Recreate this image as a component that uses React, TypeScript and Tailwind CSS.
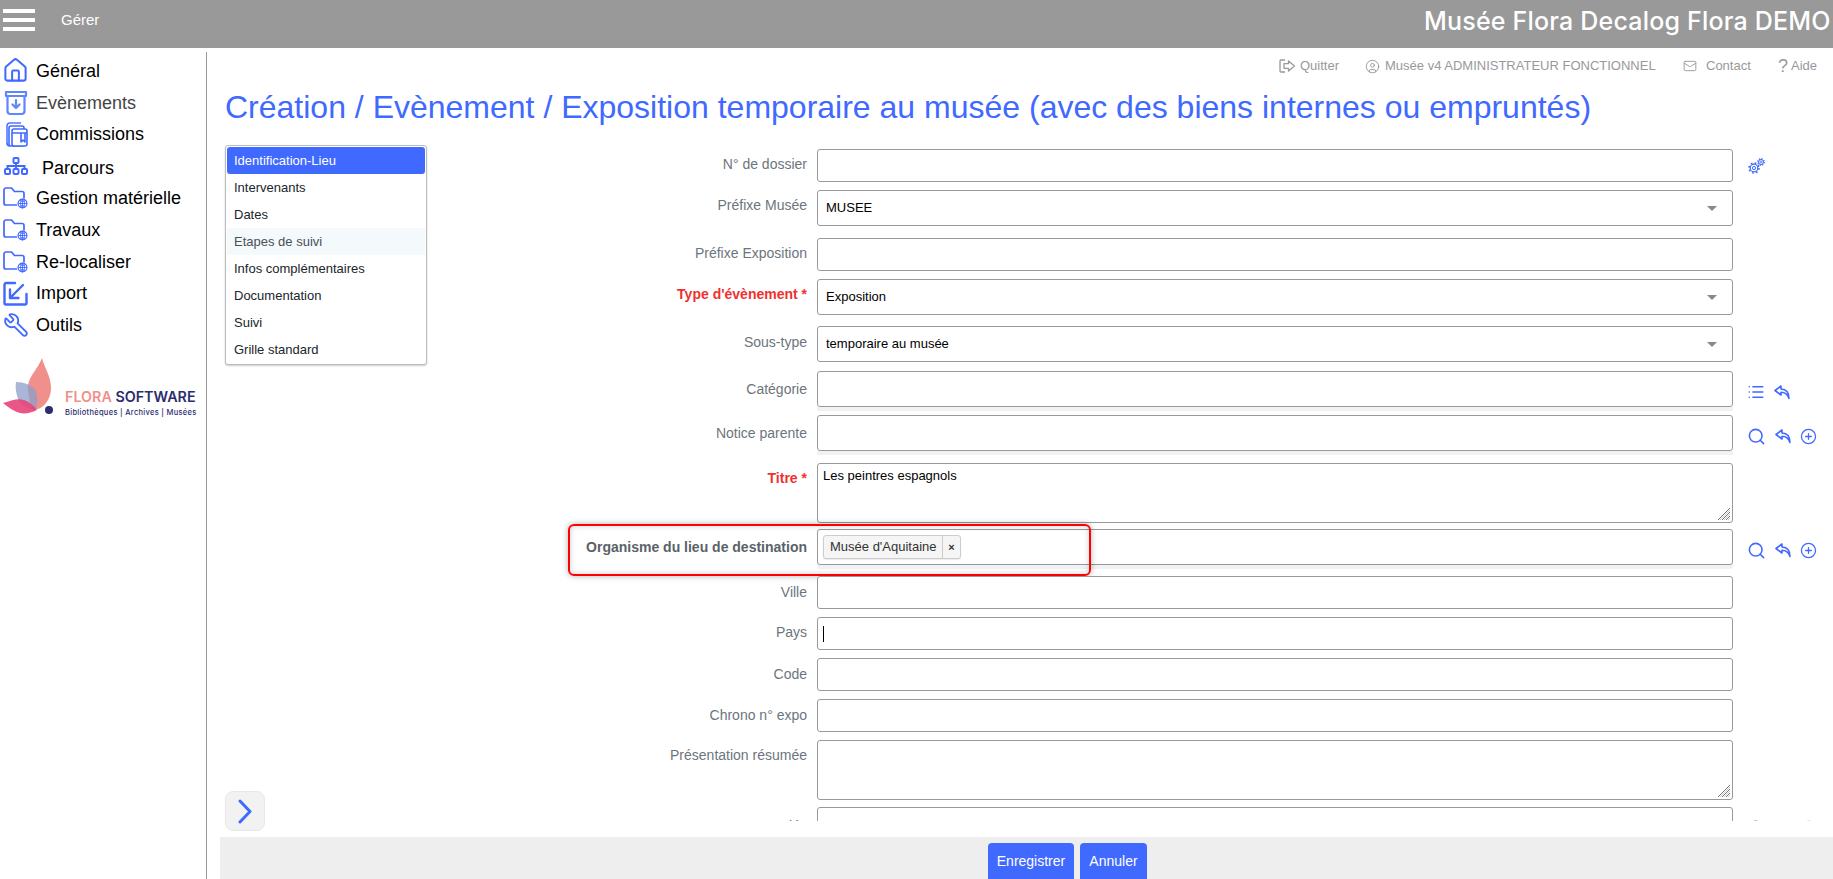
import React from "react";
import { House, Wrench, Search, CirclePlus, List, Mail, CircleUser } from "lucide-react";

const BLUE = "#4069ff";

function ArchiveIcon() {
  return (
    <svg width="26" height="26" viewBox="0 0 26 26" fill="none" stroke="#5f85ff" strokeWidth="2.2" strokeLinejoin="round" strokeLinecap="round">
      <path d="M3 2h20v4H3z" />
      <path d="M4.5 6v15a3 3 0 0 0 3 3h11a3 3 0 0 0 3-3V6" />
      <path d="M13 10v8M9.5 14.5 13 18l3.5-3.5M8.5 8.5" />
    </svg>
  );
}
function CommissionIcon() {
  return (
    <svg width="26" height="27" viewBox="0 0 26 27" fill="none" stroke={BLUE} strokeWidth="1.6" strokeLinejoin="round">
      <path d="M4 22V5a3 3 0 0 1 3-3h11" opacity=".9" />
      <path d="M7 25a3 3 0 0 1-3-3" />
      <rect x="6" y="5" width="15" height="20" rx="2" fill="#fff" />
      <rect x="9" y="8" width="15" height="17" rx="2" fill="#fff" />
      <path d="M9 12h15M18 12v9l2-2 2 2v-9" />
    </svg>
  );
}
function ParcoursIcon() {
  return (
    <svg width="24" height="18" viewBox="0 0 24 18" fill="none" stroke={BLUE} strokeWidth="2">
      <rect x="9.5" y="1" width="5" height="5" rx="1" />
      <rect x="1" y="12" width="5" height="5" rx="1" />
      <rect x="9.5" y="12" width="5" height="5" rx="1" />
      <rect x="18" y="12" width="5" height="5" rx="1" />
      <path d="M12 6v6M3.5 12V9h17v3" />
    </svg>
  );
}
function FolderGlobeIcon() {
  return (
    <svg width="25" height="22" viewBox="0 0 25 22" fill="none" stroke={BLUE} strokeWidth="1.7" strokeLinejoin="round">
      <path d="M14 18H3a2 2 0 0 1-2-2V3a2 2 0 0 1 2-2h5.5l3 3.5H19a2 2 0 0 1 2 2v5" />
      <circle cx="19.5" cy="16.5" r="4.4" fill="#fff" strokeWidth="1.2" />
      <path d="M15 16.5h9M19.5 12v9M16.5 13.5c2 1 4 1 6 0M16.5 19.5c2-1 4-1 6 0" strokeWidth=".9" />
      <ellipse cx="19.5" cy="16.5" rx="2" ry="4.4" strokeWidth=".9" />
    </svg>
  );
}
function ImportIcon() {
  return (
    <svg width="25" height="25" viewBox="0 0 25 25" fill="none" stroke={BLUE} strokeWidth="2.4" strokeLinejoin="round" strokeLinecap="round">
      <path d="M12 2H3a2 2 0 0 0-1.500 1.500V22a1.500 1.500 0 0 0 1.500 1.500h19a1.500 1.500 0 0 0 1.500-1.500V13" />
      <path d="M20 4 7 17M7 8.500V17h8.500" />
    </svg>
  );
}
function ReplyIcon() {
  return (
    <svg width="16" height="15" viewBox="0 0 16 15" fill="none" stroke={BLUE} strokeWidth="1.600" strokeLinejoin="round" strokeLinecap="round">
      <path d="M7 1 1 5.500 7 10V7.300c3.500 0 6.500 1.500 8 6.200 0-6-3-9.300-8-9.500z" />
    </svg>
  );
}
function LogoutIcon() {
  return (
    <svg width="17" height="14" viewBox="0 0 17 14" fill="none" stroke="#999" strokeWidth="1.300" strokeLinejoin="round">
      <path d="M6 1H2a1 1 0 0 0-1 1v10a1 1 0 0 0 1 1h4" />
      <path d="M9.500 2 15.500 7l-6 5V9.300H5V4.700h4.500z" />
    </svg>
  );
}
function GearsIcon() {
  return (
    <svg width="17" height="16" viewBox="0 0 17 16" fill="none" stroke={BLUE}>
      <circle cx="6" cy="10" r="3.800" strokeWidth="1.200" />
      <circle cx="6" cy="10" r="5" strokeWidth="1.500" strokeDasharray="1.800 2.120" />
      <circle cx="6" cy="10" r="1.600" strokeWidth="1" />
      <circle cx="13" cy="4" r="2.500" strokeWidth="1" />
      <circle cx="13" cy="4" r="3.300" strokeWidth="1.200" strokeDasharray="1.300 1.290" />
      <circle cx="13" cy="4" r="1" strokeWidth=".8" />
    </svg>
  );
}
function ResizeHandle() {
  return (
    <svg width="14" height="14" viewBox="0 0 14 14" className="absolute right-[2px] bottom-[2px] pointer-events-none" fill="none" strokeWidth="1">
      <path d="M1 13 13 1M5 13l8-8M9 13l4-4" stroke="#777" />
      <path d="M3 13 13 3M7 13l6-6M11 13l2-2" stroke="#ccc" />
    </svg>
  );
}
function Logo() {
  return (
    <div className="relative w-[200px] h-[70px] mt-[12px]">
      <svg width="60" height="66" viewBox="0 0 60 66" className="absolute left-0 top-0">
        <path d="M42 5C37 18 27 24 28 37c1 11 4 18 5 20 9 0 18-9 18-22C51 23 44 14 42 5z" fill="#f0908a" />
        <path d="M16 29c8 0 16 3 20 9 2 7 2 13 0 18-8 1-15-3-18-10-2-6-3-12-2-17z" fill="#8c9dc9" fillOpacity=".75" />
        <path d="M3 50c8-2 14-5 21-3 6 2 10 6 13 10-6 3-12 4-17 3-7-2-12-6-17-10z" fill="#e8447a" fillOpacity=".9" />
        <circle cx="49" cy="57" r="4" fill="#2b2d6e" />
      </svg>
      <div className="absolute left-[65px] top-[36px] whitespace-nowrap font-['Inter',sans-serif] font-semibold text-[14.300px] leading-[16px]">
        <span className="text-[#f0908a]">FLORA </span>
        <span className="text-[#2b2d6e]">SOFTWARE</span>
      </div>
      <div className="absolute left-[65px] top-[55px] whitespace-nowrap font-['Inter',sans-serif] font-medium text-[7.500px] tracking-[0.3px] leading-[10px] text-[#2b2d6e]">
        Bibliothèques | Archives | Musées
      </div>
    </div>
  );
}

const navItems: { label: string; icon: React.ReactNode; cls: string }[] = [
  { label: "Général", icon: <House size={27} color={BLUE} strokeWidth={1.800} />, cls: "text-black" },
  { label: "Evènements", icon: <ArchiveIcon />, cls: "text-[#444]" },
  { label: "Commissions", icon: <CommissionIcon />, cls: "text-black" },
  { label: "Parcours", icon: <ParcoursIcon />, cls: "text-black ml-[6px] mt-[3px]" },
  { label: "Gestion matérielle", icon: <FolderGlobeIcon />, cls: "text-black" },
  { label: "Travaux", icon: <FolderGlobeIcon />, cls: "text-black" },
  { label: "Re-localiser", icon: <FolderGlobeIcon />, cls: "text-black" },
  { label: "Import", icon: <ImportIcon />, cls: "text-black" },
  { label: "Outils", icon: <Wrench size={26} color={BLUE} strokeWidth={1.700} className="-scale-x-100" />, cls: "text-black" },
];

const menu = ["Identification-Lieu", "Intervenants", "Dates", "Etapes de suivi", "Infos complémentaires", "Documentation", "Suivi", "Grille standard"];

type Row = {
  label: string;
  rowCls: string;
  labelCls: string;
  kind?: "input" | "select" | "textarea";
  value?: string;
  req?: boolean;
  shadow?: boolean;
  icons?: "gear" | "list" | "search";
  h: string;
};

const rows: Row[] = [
  { label: "N° de dossier", rowCls: "mt-[4px]", labelCls: "pt-[5px]", h: "h-[33px]", icons: "gear" },
  { label: "Préfixe Musée", rowCls: "mt-[8px]", labelCls: "pt-[5px]", h: "h-[36px]", kind: "select", value: "MUSEE" },
  { label: "Préfixe Exposition", rowCls: "mt-[12px]", labelCls: "pt-[5px]", h: "h-[33px]" },
  { label: "Type d'évènement *", rowCls: "mt-[8px]", labelCls: "pt-[5px]", h: "h-[36px]", kind: "select", value: "Exposition", req: true },
  { label: "Sous-type", rowCls: "mt-[11px]", labelCls: "pt-[6px]", h: "h-[36px]", kind: "select", value: "temporaire au musée" },
  { label: "Catégorie", rowCls: "mt-[9px]", labelCls: "pt-[8px]", h: "h-[36px]", icons: "list", shadow: true },
  { label: "Notice parente", rowCls: "mt-[8px]", labelCls: "pt-[8px]", h: "h-[36px]", icons: "search", shadow: true },
  { label: "Titre *", rowCls: "mt-[12px]", labelCls: "pt-[5px]", h: "h-[60px]", kind: "textarea", value: "Les peintres espagnols", req: true },
];
const rowsAfter: Row[] = [
  { label: "Ville", rowCls: "mt-[11px]", labelCls: "pt-[6px]", h: "h-[33px]" },
  { label: "Pays", rowCls: "mt-[8px]", labelCls: "pt-[5px]", h: "h-[33px]", value: "caret" },
  { label: "Code", rowCls: "mt-[8px]", labelCls: "pt-[6px]", h: "h-[33px]" },
  { label: "Chrono n° expo", rowCls: "mt-[8px]", labelCls: "pt-[6px]", h: "h-[33px]" },
  { label: "Présentation résumée", rowCls: "mt-[8px]", labelCls: "pt-[5px]", h: "h-[60px]", kind: "textarea" },
  { label: "Mots-clés", rowCls: "mt-[7px]", labelCls: "pt-[9px]", h: "h-[36px]", icons: "search" },
];

function RowIcons({ kind }: { kind?: Row["icons"] }) {
  if (!kind) return null;
  if (kind === "gear")
    return (
      <div className="ml-[15px] mt-[9px]">
        <GearsIcon />
      </div>
    );
  return (
    <div className="ml-[14px] mt-[12px] flex gap-[9px] items-center">
      {kind === "list" ? <List size={18} color={BLUE} strokeWidth={2.2} /> : <Search size={19} color={BLUE} strokeWidth={2} />}
      <ReplyIcon />
      {kind === "search" && <CirclePlus size={17} color={BLUE} strokeWidth={1.800} />}
    </div>
  );
}

function Field({ r }: { r: Row }) {
  const base = `w-[916px] border border-[#999] rounded-[3px] bg-white text-[13px] text-black font-['Liberation_Sans',sans-serif] ${r.h}`;
  return (
    <div className={`flex items-start ${r.rowCls}`}>
      <label
        className={`w-[250px] shrink-0 text-right text-[14px] leading-[20px] ${r.labelCls} ${
          r.req ? "text-[#f03030] font-bold" : "text-[#6c757d]"
        }`}
      >
        {r.label}
      </label>
      <div className={`relative ml-[10px] ${r.shadow ? "shadow-[0_4px_0_#f2f2f2]" : ""}`}>
        {r.kind === "textarea" ? (
          <>
            <textarea readOnly value={r.value ?? ""} className={`${base} block resize-none px-[5px] py-[4px] outline-none leading-[16px]`} />
            <ResizeHandle />
          </>
        ) : r.kind === "select" ? (
          <div className={`${base} flex items-center justify-between pl-[8px] pr-[15px]`}>
            <span>{r.value}</span>
            <svg width="10" height="5" viewBox="0 0 10 5">
              <path d="M0 0h10L5 5z" fill="#888" />
            </svg>
          </div>
        ) : r.value === "caret" ? (
          <div className={`${base} flex items-center pl-[5px]`}>
            <span className="block w-[1px] h-[16px] bg-black" />
          </div>
        ) : (
          <input readOnly className={`${base} block px-[7px] outline-none`} />
        )}
      </div>
      <RowIcons kind={r.icons} />
    </div>
  );
}

export default function App() {
  return (
    <div className="h-screen w-full overflow-hidden flex flex-col bg-white font-['Liberation_Sans',Arial,sans-serif]">
      <header className="h-[48px] shrink-0 bg-[#999] flex items-center overflow-hidden">
        <div className="ml-[3px] w-[32px] shrink-0 flex flex-col gap-[5px] -mt-[8px]">
          <span className="block h-[4px] bg-white" />
          <span className="block h-[4px] bg-white" />
          <span className="block h-[4px] bg-white" />
        </div>
        <span className="ml-[26px] w-[38px] shrink-0 text-[15px] text-white -mt-[7px]">Gérer</span>
        <div className="ml-[1325px] shrink-0 -mt-[6px] text-[25px] leading-[30px] font-medium tracking-[0.2px] text-white whitespace-nowrap font-['Inter',sans-serif]">
          Musée Flora Decalog Flora DEMO
        </div>
      </header>

      <div className="flex flex-1 min-h-0">
        <aside className="w-[207px] shrink-0 mt-[4px] border-r border-[#999]">
          <nav className="pt-[3px]">
            {navItems.map((n) => (
              <div key={n.label} className="h-[31.800px] flex items-center">
                <div className="w-[36px] shrink-0 flex justify-center pr-[5px]">{n.icon}</div>
                <span className={`text-[18px] leading-[24px] ${n.cls}`}>{n.label}</span>
              </div>
            ))}
          </nav>
          <Logo />
        </aside>

        <main className="flex-1 min-w-0 flex flex-col">
          <div className="h-[33px] shrink-0 flex items-end text-[13px] leading-[16px] text-[#999] pb-[7px]">
            <div className="ml-[1072px] flex items-center gap-[4px] w-[86px]">
              <LogoutIcon />
              <span>Quitter</span>
            </div>
            <div className="flex items-center gap-[5px] w-[318px]">
              <CircleUser size={15} strokeWidth={1.500} />
              <span>Musée v4 ADMINISTRATEUR FONCTIONNEL</span>
            </div>
            <div className="flex items-center gap-[9px] w-[95px]">
              <Mail size={14} strokeWidth={1.600} />
              <span>Contact</span>
            </div>
            <div className="flex items-center gap-[3px]">
              <span className="text-[18px] leading-[16px]">?</span>
              <span>Aide</span>
            </div>
          </div>
          <h1 className="ml-[18px] h-[44px] mt-[4px] -mb-[2px] shrink-0 text-[32px] leading-[44px] text-[#4069ff] whitespace-nowrap">
            Création / Evènement / Exposition temporaire au musée (avec des biens internes ou empruntés)
          </h1>

          <div className="flex-1 min-h-0 flex pl-[18px] pt-[18px]">
            <div className="w-[202px] shrink-0 flex flex-col pb-[6px]">
              <div className="border border-[#bbb] rounded-[3px] p-[1px] shadow-[0_1px_2px_rgba(0,0,0,0.2)] bg-white">
                {menu.map((m, i) => (
                  <div
                    key={m}
                    className={`h-[27px] flex items-center pl-[7px] text-[13px] ${
                      i === 0
                        ? "bg-[#4069ff] text-white rounded-[3px]"
                        : i === 3
                          ? "bg-[#f4f9fc] text-[#495057]"
                          : "text-[#212529]"
                    }`}
                  >
                    {m}
                  </div>
                ))}
              </div>
              <button className="mt-auto w-[40px] h-[40px] rounded-[8px] bg-[#f2f2f2] border border-[#e8e8e8] flex items-center justify-center">
                <svg width="14" height="25" viewBox="0 0 14 25" fill="none" stroke={BLUE} strokeWidth="3" strokeLinecap="round" strokeLinejoin="round">
                  <path d="M2 2l10 10.500L2 23" />
                </svg>
              </button>
            </div>

            <div className="ml-[130px] h-[676px] overflow-hidden">
              {rows.map((r) => (
                <Field key={r.label} r={r} />
              ))}
              <div className="relative flex items-start mt-[6px]">
                <label className="w-[250px] shrink-0 pt-[8px] text-right text-[14px] leading-[20px] font-bold text-[#5a6268]">
                  Organisme du lieu de destination
                </label>
                <div className="ml-[10px] w-[916px] h-[36px] border border-[#999] rounded-[3px] bg-white flex items-center pl-[5px] shadow-[0_4px_0_#f2f2f2]">
                  <div className="h-[24px] flex border border-[#ccc] rounded-[3px] bg-[#f5f5f5] text-[13px] text-[#333] shadow-[0_1px_1px_rgba(0,0,0,0.08)]">
                    <span className="w-[119px] flex items-center pl-[6px] border-r border-[#ccc]">Musée d'Aquitaine</span>
                    <span className="w-[17px] flex items-center justify-center text-[11px] font-bold">×</span>
                  </div>
                </div>
                <RowIcons kind="search" />
                <div className="absolute left-[11px] -top-[5px] w-[523px] h-[52px] border-2 border-[#f00] rounded-[6px] shadow-[0_0_6px_rgba(0,0,0,0.3),inset_0_0_6px_rgba(0,0,0,0.18)] pointer-events-none" />
              </div>
              {rowsAfter.map((r) => (
                <Field key={r.label} r={r} />
              ))}
            </div>
          </div>

          <div className="h-[42px] shrink-0 ml-[13px] bg-[#eee] flex items-end justify-start pl-[768px] gap-[6px]">
            <button className="w-[86px] h-[36px] rounded-t-[4px] bg-[#4069ff] text-white text-[14px]">Enregistrer</button>
            <button className="w-[67px] h-[36px] rounded-t-[4px] bg-[#4069ff] text-white text-[14px]">Annuler</button>
          </div>
        </main>
      </div>
    </div>
  );
}
